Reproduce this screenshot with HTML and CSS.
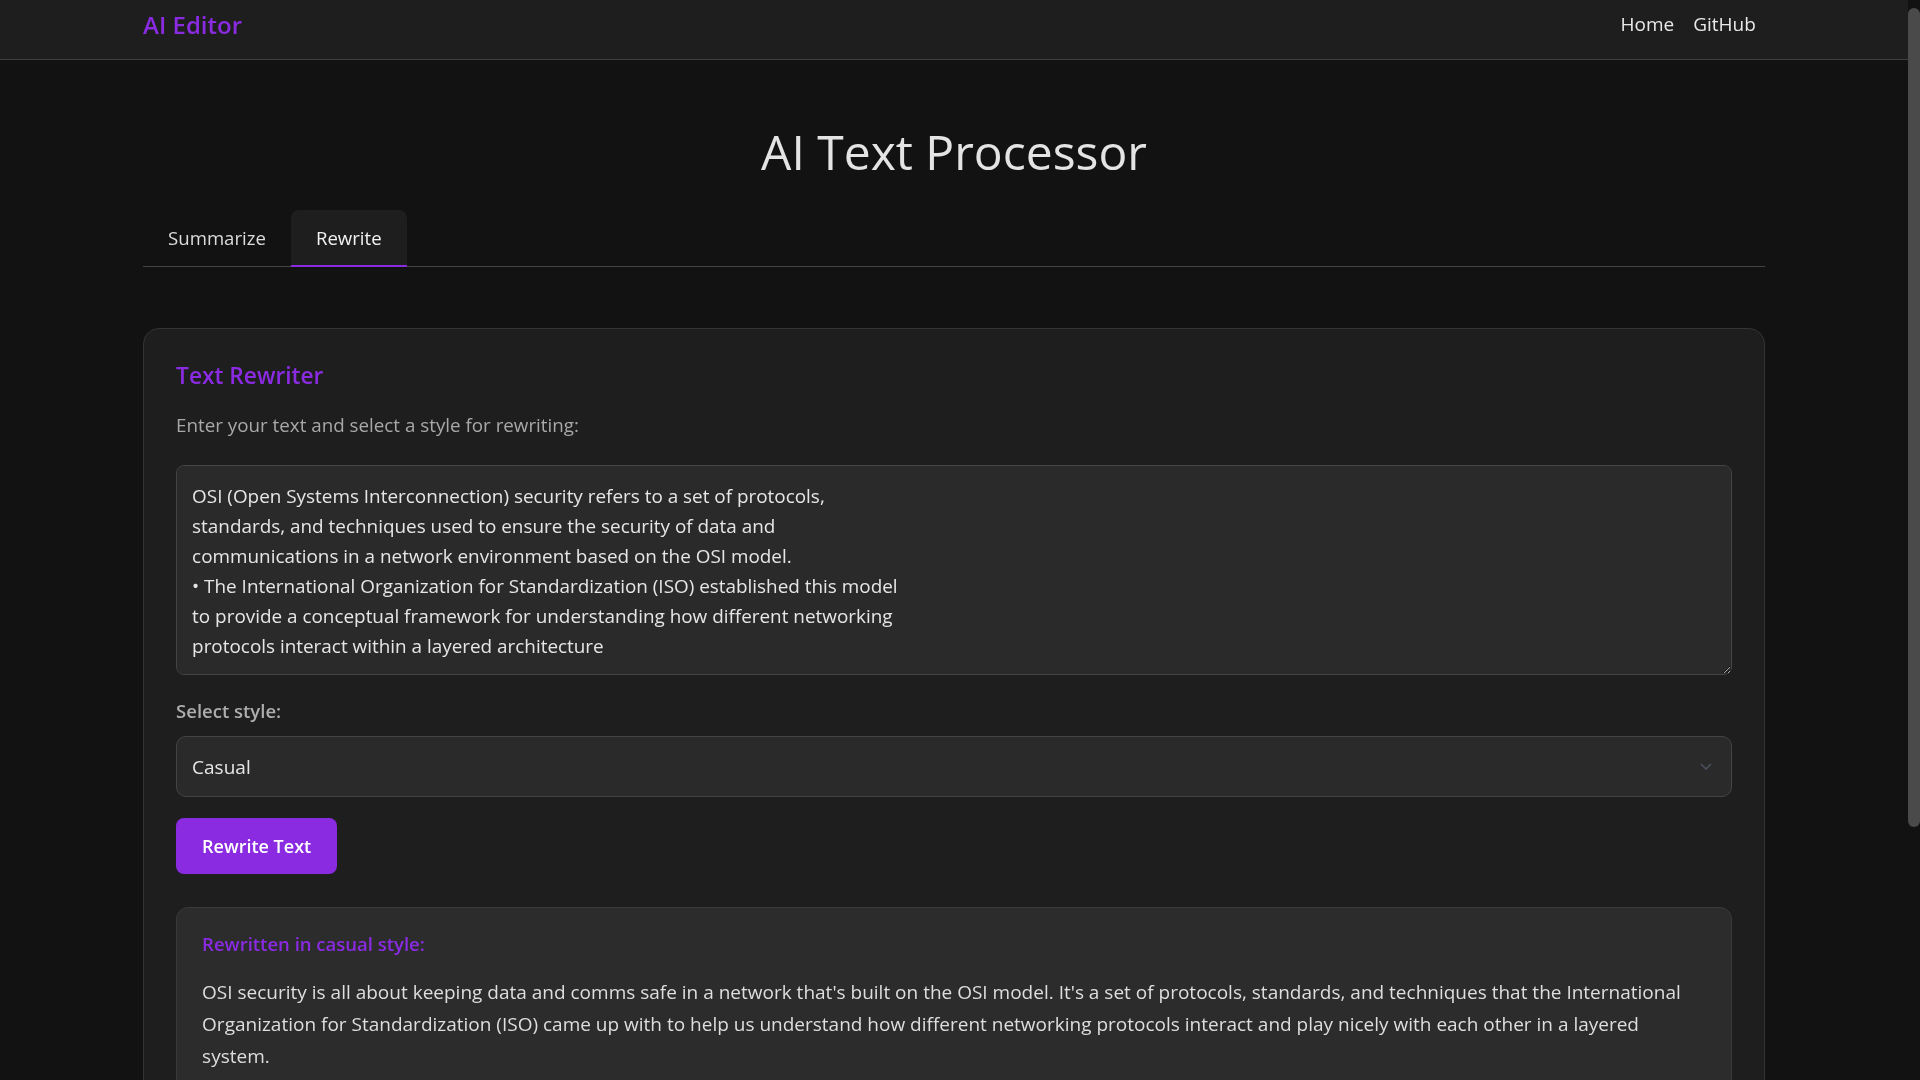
FILE: index.html
```html
<!DOCTYPE html>
<html lang="en">
<head>
<meta charset="utf-8">
<title>AI Text Processor</title>
<link rel="stylesheet" href="styles.css">
</head>
<body>
<nav class="navbar">
  <div class="nav-inner">
    <a class="brand" href="#">AI Editor</a>
    <div class="nav-links">
      <a href="#">Home</a>
      <a href="#">GitHub</a>
    </div>
  </div>
</nav>
<main class="container">
  <h1 class="title">AI Text Processor</h1>
  <div class="tabs">
    <button class="tab">Summarize</button>
    <button class="tab active">Rewrite</button>
  </div>
  <section class="card">
    <h2 class="card-title">Text Rewriter</h2>
    <p class="desc">Enter your text and select a style for rewriting:</p>
    <textarea class="input">OSI (Open Systems Interconnection) security refers to a set of protocols,
standards, and techniques used to ensure the security of data and
communications in a network environment based on the OSI model.
• The International Organization for Standardization (ISO) established this model
to provide a conceptual framework for understanding how different networking
protocols interact within a layered architecture</textarea>
    <label class="label" for="style">Select style:</label>
    <div class="select-wrap">
      <select class="select" id="style">
        <option>Casual</option>
        <option>Formal</option>
        <option>Professional</option>
      </select>
      <svg class="chevron" width="12" height="7" viewBox="0 0 12 7" aria-hidden="true"><path d="M1 1l5 5 5-5" fill="none" stroke="#4b515c" stroke-width="1.5"/></svg>
    </div>
    <button class="btn">Rewrite Text</button>
    <div class="result">
      <h3 class="result-title">Rewritten in casual style:</h3>
      <p class="result-text">OSI security is all about keeping data and comms safe in a network that's built on the OSI model. It's a set of protocols, standards, and techniques that the International Organization for Standardization (ISO) came up with to help us understand how different networking protocols interact and play nicely with each other in a layered system.</p>
    </div>
  </section>
</main>
<div class="scrollbar" aria-hidden="true"><div class="scroll-thumb"></div></div>
</body>
</html>
```
FILE: styles.css
```css
body {
  margin: 0 12px 0 0;
  background: #121212;
  color: #e0e0e0;
  font-family: "Open Sans", "Noto Sans", sans-serif;
}

.scrollbar {
  position: fixed;
  top: 0;
  right: 0;
  width: 12px;
  height: 100vh;
  background: #121212;
}

.scroll-thumb {
  margin-top: 8px;
  height: 819px;
  background: #4a4a4a;
  border-radius: 6px;
}

.navbar {
  background: #1e1e1e;
  border-bottom: 1px solid #3d3d3d;
  padding-bottom: 11px;
}

.nav-inner {
  width: 85%;
  margin: 0 auto;
  height: 48px;
  display: flex;
  align-items: center;
  justify-content: space-between;
}

.brand {
  color: #8a2be2;
  font-size: 24px;
  font-weight: 600;
  text-decoration: none;
}

.nav-links {
  display: flex;
  gap: 19px;
  padding-right: 9px;
}

.nav-links a {
  color: #e8e8e8;
  font-size: 19px;
  text-decoration: none;
}

.container {
  width: 85%;
  margin: 0 auto;
  padding-bottom: 290px;
}

.title {
  text-align: center;
  font-size: 48px;
  font-weight: 500;
  line-height: 58px;
  margin: 63px 0 29px;
  color: #e4e4e4;
}

.tabs {
  display: flex;
  border-bottom: 1px solid #444;
}

.tab {
  height: 57px;
  padding: 0 25px;
  margin-bottom: -1px;
  background: none;
  border: none;
  border-bottom: 2px solid transparent;
  border-radius: 8px 8px 0 0;
  color: #dcdcdc;
  font-family: inherit;
  font-size: 18.6px;
  cursor: pointer;
}

.tab.active {
  background: #1e1e1e;
  border-bottom-color: #8a2be2;
  color: #f2f2f2;
  font-weight: 500;
}

.card {
  margin-top: 61px;
  background: #1e1e1e;
  border: 1px solid #343434;
  border-radius: 16px;
  padding: 32px;
}

.card-title {
  margin: 0;
  font-size: 22.7px;
  font-weight: 600;
  line-height: 30px;
  color: #8a2be2;
}

.desc {
  margin: 21px 0 26px;
  font-size: 18.8px;
  line-height: 27px;
  color: #a8a8a8;
}

.input {
  display: block;
  width: 100%;
  box-sizing: border-box;
  height: 210px;
  padding: 15px;
  background: #2a2a2a;
  border: 1px solid #444;
  border-radius: 8px;
  color: #e6e6e6;
  font-family: inherit;
  font-size: 18.9px;
  line-height: 30px;
  resize: vertical;
  outline: none;
}

.label {
  display: block;
  margin: 22px 0 12px;
  font-size: 18.5px;
  font-weight: 600;
  line-height: 27px;
  color: #adadad;
}

.select-wrap {
  position: relative;
}

.select {
  display: block;
  width: 100%;
  height: 61px;
  box-sizing: border-box;
  padding: 0 15px;
  appearance: none;
  -webkit-appearance: none;
  background: #2a2a2a;
  border: 1px solid #444;
  border-radius: 10px;
  color: #e6e6e6;
  font-family: inherit;
  font-size: 19px;
  outline: none;
}

.chevron {
  position: absolute;
  right: 20px;
  top: 27px;
  pointer-events: none;
}

.btn {
  display: block;
  margin-top: 21px;
  height: 56px;
  padding: 0 26px;
  background: #8a2be2;
  color: #fff;
  border: none;
  border-radius: 8px;
  font-family: inherit;
  font-size: 18px;
  font-weight: 600;
  cursor: pointer;
}

.result {
  margin-top: 33px;
  background: #2c2c2c;
  border: 1px solid #3a3a3a;
  border-radius: 12px;
  padding: 24px 25px;
}

.result-title {
  margin: 0;
  font-size: 18.5px;
  font-weight: 600;
  line-height: 24px;
  color: #8a2be2;
}

.result-text {
  margin: 20px 0 0;
  font-size: 19px;
  line-height: 32px;
  color: #dedede;
}
```
